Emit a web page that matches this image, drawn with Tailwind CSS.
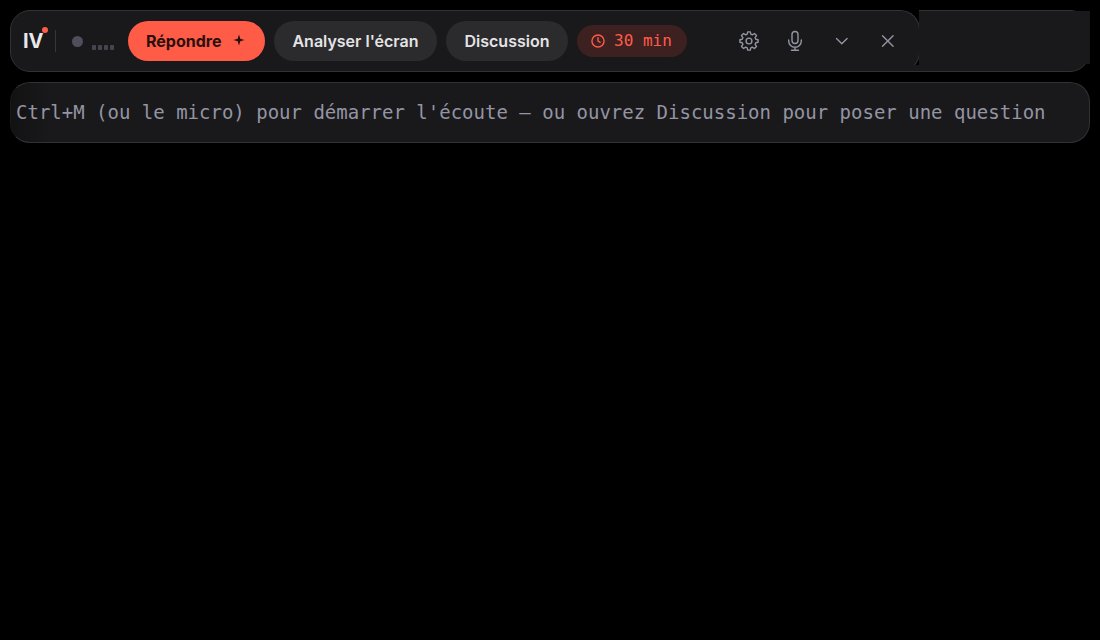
<!DOCTYPE html>
<html lang="fr">
<head>
<meta charset="utf-8">
<meta name="viewport" content="width=device-width, initial-scale=1">
<title>IV</title>
<script src="https://cdn.jsdelivr.net/npm/@tailwindcss/browser@4"></script>
</head>
<body class="min-h-screen bg-black p-[10px] font-['Inter',sans-serif]">
<header class="relative flex h-[62px] items-center rounded-[20px] border border-[#323234] bg-[#19191b] pl-3">
  <!-- rounded end of the toolbar and the panel that continues behind it -->
  <div class="absolute -top-px left-[888px] h-[55px] w-5 overflow-hidden bg-black"><div class="h-[62px] w-[21px] rounded-r-[20px] border border-l-0 border-[#323234] bg-[#19191b]"></div></div>
  <div class="absolute top-0 -right-px left-[908px] h-[53px] bg-[#19191b]"></div>
  <div class="relative w-8 text-xl leading-6 font-bold text-[#e8e8ea]">IV<span class="absolute -top-0.5 left-[19px] size-[6px] rounded-full bg-[#ff5c48]"></span></div>
  <div class="h-[22px] w-px bg-[#37373b]"></div>
  <div class="ml-4 size-[11px] rounded-full bg-[#4f4f5c]"></div>
  <div class="mt-3 ml-[9px] flex w-[22px] gap-[2px]">
    <span class="h-[5px] w-1 rounded-[1px] bg-[#454550]"></span><span class="h-[5px] w-1 rounded-[1px] bg-[#454550]"></span><span class="h-[5px] w-1 rounded-[1px] bg-[#454550]"></span><span class="h-[5px] w-1 rounded-[1px] bg-[#454550]"></span>
  </div>
  <div class="ml-[14px] flex items-center gap-[9px] text-base font-semibold whitespace-nowrap text-[#e4e4e6]">
    <button class="flex h-10 w-[137px] items-center gap-3 rounded-full bg-[#ff5c48] pl-[18px] font-bold text-[#2a100d]">Répondre
      <svg class="mb-0.5 size-3" viewBox="0 0 12 12" fill="currentColor"><path d="M6 .5 7.300 4.700 11.500 6 7.300 7.300 6 11.500 4.700 7.300.5 6 4.700 4.700Z"/></svg>
    </button>
    <button class="h-10 w-[163px] rounded-full bg-[#2b2b2d]">Analyser l'écran</button>
    <button class="h-10 w-[122px] rounded-full bg-[#2b2b2d]">Discussion</button>
    <div class="flex h-8 w-[110px] items-center gap-[9px] rounded-full bg-[#3d2020] pl-[14px] font-['DejaVu_Sans_Mono',monospace] font-normal text-[#ff5c48]">
      <svg class="size-[14px]" viewBox="0 0 15 15" fill="none" stroke="currentColor" stroke-width="1.500" stroke-linecap="round" stroke-linejoin="round"><circle cx="7.500" cy="7.500" r="6.500"/><path d="M7.500 4v3.500l2.300 1.400"/></svg>30 min
    </div>
  </div>
  <div class="relative ml-11 flex items-center gap-[10px] text-[#9494a3]">
    <button class="grid size-9 place-items-center" aria-label="Paramètres"><svg class="size-[22px]" viewBox="0 0 22 22" fill="none" stroke="currentColor" stroke-width="1.400" stroke-linejoin="round"><circle cx="11" cy="11" r="2.900"/><path d="M9.700 1.900h2.600l.5 2.300 1.500.7 2.100-1.400 2.100 2.100-1.400 2.100.7 1.500 2.300.5v2.600l-2.300.5-.7 1.500 1.400 2.100-2.100 2.100-2.100-1.400-1.500.7-.5 2.300H9.700l-.5-2.300-1.500-.7-2.100 1.400-2.100-2.100 1.400-2.100-.7-1.500-2.300-.5V9.700l2.300-.5.7-1.500-1.400-2.100 2.100-2.100 2.100 1.400 1.500-.7Z"/></svg></button>
    <button class="grid size-9 place-items-center" aria-label="Micro"><svg class="size-[22px]" viewBox="0 0 22 22" fill="none" stroke="currentColor" stroke-width="1.400" stroke-linecap="round"><rect x="8" y="1.500" width="6" height="12" rx="3"/><path d="M4.700 10v1a6.300 6.300 0 0 0 12.600 0v-1M11 17.300v3M7.500 20.300h7"/></svg></button>
    <button class="grid size-9 place-items-center" aria-label="Réduire"><svg class="size-[22px]" viewBox="0 0 22 22" fill="none" stroke="currentColor" stroke-width="1.400" stroke-linecap="round" stroke-linejoin="round"><path d="m6.500 8.500 5.300 5.200 5.300-5.200"/></svg></button>
    <button class="grid size-9 place-items-center" aria-label="Fermer"><svg class="size-[22px]" viewBox="0 0 22 22" fill="none" stroke="currentColor" stroke-width="1.400" stroke-linecap="round"><path d="m6.500 5.700 10.600 10.600M17.100 5.700 6.500 16.300"/></svg></button>
  </div>
</header>
<main class="mt-[10px] flex h-[61px] items-center rounded-[20px] border border-l-[#19191b] border-[#323234] bg-linear-to-r from-[#121213] to-[#19191b] to-[40px] pb-0.5 pl-[5px]">
  <p class="font-['DejaVu_Sans_Mono',monospace] text-[19px] leading-7 whitespace-nowrap text-[#9494a3]">Ctrl+M (ou le micro) pour démarrer l'écoute — ou ouvrez Discussion pour poser une question</p>
</main>
</body>
</html>
